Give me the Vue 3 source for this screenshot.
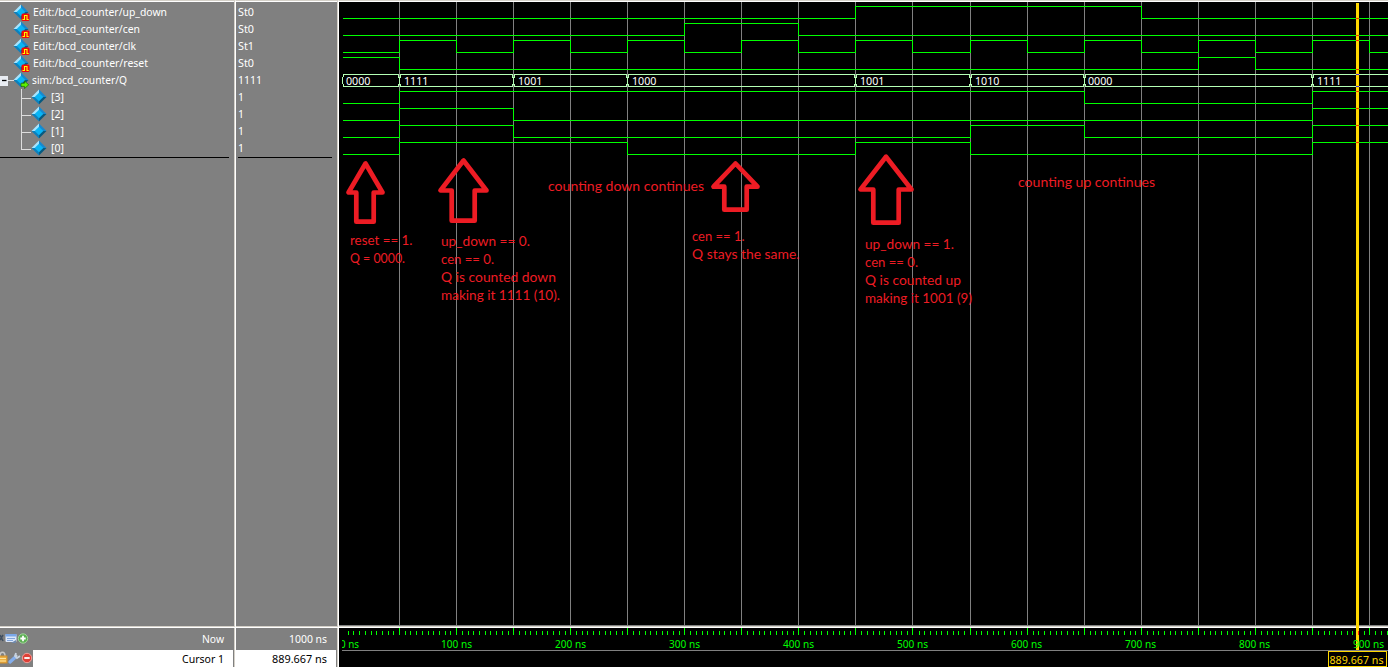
<script setup>
const signals = [
  { name: 'Edit:/bcd_counter/up_down', value: 'St0', kind: 'edit', w: 134 },
  { name: 'Edit:/bcd_counter/cen', value: 'St0', kind: 'edit', w: 107 },
  { name: 'Edit:/bcd_counter/clk', value: 'St1', kind: 'edit', w: 103 },
  { name: 'Edit:/bcd_counter/reset', value: 'St0', kind: 'edit', w: 115 },
  { name: 'sim:/bcd_counter/Q', value: '1111', kind: 'bus', w: 95 },
  { name: '[3]', value: '1', kind: 'bit', w: 13 },
  { name: '[2]', value: '1', kind: 'bit', w: 13 },
  { name: '[1]', value: '1', kind: 'bit', w: 13 },
  { name: '[0]', value: '1', kind: 'bit', w: 13 }
]
const valueWidth = (v) => (v.length === 3 ? 16 : v.length * 6)

const grid = [399, 456, 513, 570, 627, 684, 741, 798, 855, 912, 970, 1027, 1084, 1141, 1198, 1255, 1312, 1369]

// Each trace lists its high level, its starting state and the x of every edge.
const traces = [
  { y: 6, high: false, edges: [855, 1141] },
  { y: 23, high: false, edges: [684, 798] },
  { y: 40, high: false, edges: grid },
  { y: 57, high: true, edges: [399, 1198, 1255] },
  { y: 91, high: false, edges: [399, 1084, 1312] },
  { y: 108, high: false, edges: [399, 513, 1312] },
  { y: 125, high: false, edges: [399, 513, 970, 1084, 1312] },
  { y: 142, high: false, edges: [399, 627, 855, 970, 1312] }
]
function tracePath(t) {
  let high = t.high
  const y = () => t.y + (high ? 0.5 : 12.5)
  let d = `M343 ${y()}`
  for (const x of t.edges) {
    d += `H${x + 0.5}`
    high = !high
    d += `V${y()}`
  }
  return d + 'H1388'
}
const cursorHits = traces.map((t) => {
  const flips = t.edges.filter((x) => x < 1357).length
  return t.y + ((flips % 2 === 1) !== t.high ? 0 : 12)
})

const busValues = [
  { x: 346, v: '0000' }, { x: 404, v: '1111' }, { x: 518, v: '1001' }, { x: 632, v: '1000' },
  { x: 860, v: '1001' }, { x: 975, v: '1010' }, { x: 1088, v: '0000' }, { x: 1317, v: '1111' }
]
const busEdges = [399, 513, 627, 855, 970, 1084, 1312]

const ticks = []
for (let i = 1; i <= 183; i++) {
  const major = i % 10 === 0
  const x = major ? grid[i / 10 - 1] : Math.round(342 + i * 5.708)
  ticks.push({ x, major })
}
const timeLabels = [
  { x: 340, t: '0 ns', w: 19 },
  { x: 441, t: '100 ns', w: 31 }, { x: 555, t: '200 ns', w: 31 }, { x: 669, t: '300 ns', w: 31 },
  { x: 783, t: '400 ns', w: 31 }, { x: 897, t: '500 ns', w: 31 }, { x: 1011, t: '600 ns', w: 31 },
  { x: 1125, t: '700 ns', w: 31 }, { x: 1239, t: '800 ns', w: 31 }, { x: 1353, t: '900 ns', w: 31 }
]

const arrows = [
  'M365.5 163.5L348.5 192.5H356.3V221.7H373.7V192.5H382.5Z',
  'M463.5 160.5L440.5 190.5H451.7V220.7H474.7V190.5H486.5Z',
  'M735.5 163.5L713.5 186.7H724.3V209.7H746.7V186.7H757.5Z',
  'M886 156.7L860.5 189.5H873.3V222.7H898.7V189.5H911.5Z'
]
const notes = [
  { x: 350, y: 245, w: 62.5, t: 'reset == 1.' },
  { x: 350, y: 263, w: 55, t: 'Q = 0000.' },
  { x: 441, y: 246, w: 89, t: 'up_down == 0.' },
  { x: 441, y: 264, w: 53, t: 'cen == 0.' },
  { x: 441, y: 282, w: 115, t: 'Q is counted down' },
  { x: 441, y: 300, w: 119, t: 'making it 1111 (10).' },
  { x: 548, y: 191, w: 156, t: 'counting down continues' },
  { x: 692, y: 241, w: 52.5, t: 'cen == 1.' },
  { x: 692, y: 259, w: 107.5, t: 'Q stays the same.' },
  { x: 865, y: 249, w: 89, t: 'up_down == 1.' },
  { x: 865, y: 267, w: 53, t: 'cen == 0.' },
  { x: 865, y: 285, w: 96, t: 'Q is counted up' },
  { x: 865, y: 303, w: 107, t: 'making it 1001 (9)' },
  { x: 1018, y: 187, w: 137, t: 'counting up continues' }
]
</script>

<template>
  <div class="window">
    <section class="pane names">
      <div class="rows">
        <div v-for="s in signals" :key="s.name" class="row" :class="s.kind">
          <svg class="icon" width="17" height="17" viewBox="0 0 17 17">
            <path d="M0.5 8L8 0.5V8Z" fill="#a5e4ff" />
            <path d="M8 0.5L15.5 8H8Z" fill="#1689cf" />
            <path d="M0.5 8H8V15.5Z" fill="#0c80bd" />
            <path d="M15.5 8L8 15.5V8Z" fill="#075a80" />
            <path d="M8 3.7L12.3 8L8 12.3L3.7 8Z" fill="#08b5f5" />
            <g v-if="s.kind === 'edit'">
              <rect x="8.5" y="9.5" width="8" height="7.5" rx="1.5" fill="#f40808" />
              <path d="M9.5 15.5H11.5V11.5H14V15.5H15.7" fill="none" stroke="#ffff00" stroke-width="1.1" />
            </g>
            <path v-if="s.kind === 'bus'" d="M8 11.2H11.5V9L15.7 12.8L11.5 16.6V14.4H8Z" fill="#5cf000" stroke="#176900" stroke-width=".7" />
          </svg>
          <svg class="label" :width="s.w + 2" height="17">
            <text x="0" y="12" :textLength="s.w" lengthAdjust="spacingAndGlyphs">{{ s.name }}</text>
          </svg>
        </div>
        <svg class="tree" width="32" height="82">
          <rect x="-2" y="4" width="10" height="10" fill="#e8ecf2" />
          <path d="M2 8.5H6.5" stroke="#000" stroke-width="1.3" />
          <path d="M8 8.5H14M21.5 17V77.5M21 26.5H31M21 43.5H31M21 60.5H31M21 77.5H31" fill="none" stroke="#dedede" />
        </svg>
      </div>
      <div class="now">
        <svg class="tools" width="32" height="20">
          <path d="M0 7l3 6M0 12l3-5" stroke="#414f60" stroke-width="1.6" />
          <rect x="5.5" y="6" width="11" height="8" rx="1" fill="#dbe7fb" />
          <rect x="5.5" y="6" width="11" height="2.5" fill="#7aa7e8" />
          <path d="M7 10.5H15M7 12.5H13" stroke="#82a6dc" />
          <path d="M11 15l5-3v3z" fill="#7189aa" />
          <circle cx="23" cy="10.5" r="4.7" fill="#5cae53" stroke="#a2d69c" />
          <path d="M20.3 10.5H25.7M23 7.8V13.2" stroke="#fff" stroke-width="1.8" />
        </svg>
        <svg width="23" height="20"><text x="0" y="15" textLength="22" lengthAdjust="spacingAndGlyphs">Now</text></svg>
      </div>
      <div class="cursor">
        <div class="toolbox">
          <svg class="tools" width="33" height="17">
            <path d="M0 6C0 1 5 1 5 6" fill="none" stroke="#c7c7c7" stroke-width="1.5" />
            <rect x="-1" y="6" width="8" height="7" fill="#edaf42" stroke="#ce8d2d" />
            <path d="M0 8.5H6M0 11H6" stroke="#ffe49c" />
            <path d="M10 12L15.5 7" stroke="#83adeb" stroke-width="3.3" stroke-linecap="round" />
            <path d="M15 7L17 5M16 3L15 6L17 8L20 6" fill="none" stroke="#c8d3e0" stroke-width="1.8" />
            <circle cx="27" cy="8" r="4.7" fill="#dd3f36" stroke="#f3a09a" />
            <path d="M24.3 8H29.7" stroke="#fff" stroke-width="1.8" />
          </svg>
        </div>
        <svg width="43" height="17"><text x="0" y="13" textLength="42" lengthAdjust="spacingAndGlyphs">Cursor 1</text></svg>
      </div>
    </section>

    <section class="pane values">
      <div class="rows">
        <div v-for="s in signals" :key="s.name" class="row">
          <svg class="label" width="40" height="17">
            <text x="0" y="12" :textLength="valueWidth(s.value)" lengthAdjust="spacingAndGlyphs">{{ s.value }}</text>
          </svg>
        </div>
      </div>
      <div class="now">
        <svg width="40" height="20"><text x="1" y="15" textLength="38" lengthAdjust="spacingAndGlyphs">1000 ns</text></svg>
      </div>
      <div class="cursor">
        <svg width="57" height="17"><text x="1" y="13" textLength="55" lengthAdjust="spacingAndGlyphs">889.667 ns</text></svg>
      </div>
    </section>

    <svg class="wave" width="1049" height="667" viewBox="339 0 1049 667">
      <g shape-rendering="crispEdges">
        <rect x="339" y="0" width="1049" height="1" fill="#d4d0c8" />
        <rect x="339" y="1" width="1049" height="1" fill="#fff" />
        <rect v-for="x in grid" :key="x" :x="x" y="2" width="1" height="623" fill="#808080" />
        <path v-for="t in traces" :key="t.y" :d="tracePath(t)" fill="none" stroke="#00ff00" />
        <path d="M343 74.5H1388M343 86.5H1388" stroke="#b4ffb4" />
        <path d="M343.5 74V77M342.5 77V84M343.5 84V87" stroke="#b4ffb4" />
        <g v-for="x in busEdges" :key="x">
          <rect :x="x - 1" y="75" width="3" height="3" fill="#b4ffb4" />
          <rect :x="x" y="74" width="1" height="3" fill="#808080" />
          <rect :x="x - 1" y="84" width="3" height="3" fill="#b4ffb4" />
          <rect :x="x" y="85" width="1" height="2" fill="#808080" />
          <rect :x="x" y="78" width="1" height="6" fill="#b4ffb4" />
        </g>
      </g>
      <text v-for="b in busValues" :key="b.x" :x="b.x" y="85" textLength="24.5" lengthAdjust="spacingAndGlyphs" class="bus-text">{{ b.v }}</text>

      <path v-for="a in arrows" :key="a" :d="a" class="arrow" />
      <text v-for="n in notes" :key="n.x + '-' + n.y" :x="n.x" :y="n.y" :textLength="n.w" lengthAdjust="spacingAndGlyphs" class="note">{{ n.t }}</text>

      <g shape-rendering="crispEdges">
        <rect x="339" y="625" width="1049" height="1" fill="#808080" />
        <rect x="339" y="626" width="1049" height="1" fill="#d4d0c8" />
        <rect x="339" y="627" width="1049" height="1" fill="#fff" />
        <rect v-for="k in ticks" :key="k.x" :x="k.x" :y="k.major ? 628 : 631" width="1" :height="k.major ? 7 : 4" fill="#00ff00" />
        <rect x="342" y="650" width="1046" height="1" fill="#808080" />
        <rect x="1356" y="3" width="3" height="647" fill="#ffd700" />
        <rect v-for="y in cursorHits" :key="y" x="1356" :y="y" width="3" height="1" fill="#ff2800" />
        <rect x="1356" y="74" width="3" height="1" fill="#4b28c8" />
        <rect x="1356" y="86" width="3" height="1" fill="#4b28c8" />
        <rect x="1358" y="631" width="1" height="4" fill="#ff2800" />
      </g>
      <text v-for="l in timeLabels" :key="l.x" :x="l.x" y="648" :textLength="l.w" lengthAdjust="spacingAndGlyphs" class="time">{{ l.t }}</text>
      <rect x="339" y="636" width="3" height="14" fill="#000" />
      <rect x="1328.5" y="651.5" width="58" height="15" fill="#000" stroke="#ffd700" shape-rendering="crispEdges" />
      <text x="1329.5" y="664" textLength="54" lengthAdjust="spacingAndGlyphs" class="cursor-time">889.667 ns</text>
    </svg>
  </div>
</template>

<style>
body {
  background: #000;
}
</style>

<style scoped>
.window {
  display: flex;
  width: 1388px;
  height: 667px;
  overflow: hidden;
  background: #000;
  font: 11.3px "Noto Sans", "DejaVu Sans Condensed", sans-serif;
}
svg {
  display: block;
  flex: none;
}
.pane {
  display: flex;
  flex-direction: column;
  flex: none;
  box-sizing: border-box;
  height: 667px;
  background: #808080;
  border-top: 1px solid #d4d0c8;
  border-right: 1px solid #fff;
  box-shadow: inset -1px 0 #d4d0c8, inset 0 1px #fff;
}
.names {
  width: 236px;
}
.values {
  width: 103px;
}
.rows {
  position: relative;
  height: 625px;
  box-sizing: border-box;
  padding-top: 3px;
}
.rows::after {
  content: "";
  display: block;
  height: 1px;
  background: #000;
}
.names .rows::after {
  width: 229px;
}
.values .rows::after {
  margin-left: 2px;
  width: 94px;
}
.row {
  display: flex;
  align-items: center;
  height: 17px;
}
.row text,
.now text {
  fill: #fff;
}
.names .row {
  padding-left: 13px;
  gap: 3px;
}
.names .row.bus {
  gap: 2px;
}
.names .row.bit {
  padding-left: 31px;
}
.values .row {
  padding-left: 2px;
}
.tree {
  position: absolute;
  left: 0;
  top: 71px;
}
.now,
.cursor {
  display: flex;
  justify-content: space-between;
  box-sizing: border-box;
}
.now {
  height: 24px;
  padding: 1px 10px 0 0;
  border-top: 1px solid #d4d0c8;
  box-shadow: inset 0 1px #fff;
}
.cursor {
  height: 17px;
  margin-right: 2px;
  padding-right: 8px;
  background: #fff;
}
.cursor text {
  fill: #000;
}
.toolbox {
  width: 33px;
  height: 17px;
  background: #808080;
}
.values .now,
.values .cursor {
  justify-content: flex-end;
}
.bus-text {
  fill: #fff;
}
.time {
  fill: #00ff00;
}
.cursor-time {
  fill: #ffd700;
}
.arrow {
  fill: none;
  stroke: #ed1c24;
  stroke-width: 4.7;
  stroke-linejoin: round;
}
.note {
  fill: #ed1c24;
  font: 13.3px Lato, sans-serif;
}
</style>
